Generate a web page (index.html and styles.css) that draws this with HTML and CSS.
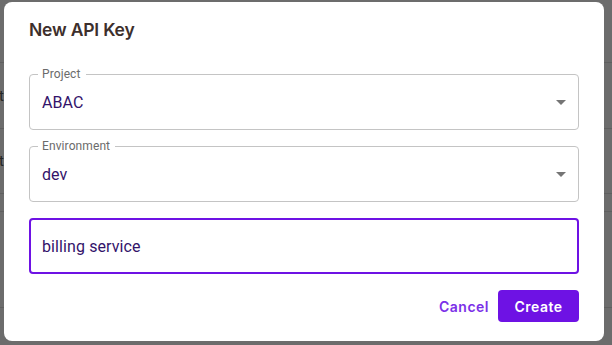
FILE: index.html
```html
<!DOCTYPE html>
<html lang="en">
<head>
  <meta charset="UTF-8" />
  <meta name="viewport" content="width=device-width, initial-scale=1.0" />
  <title>New API Key</title>
  <link rel="stylesheet" href="styles.css">
</head>
<body>

  <div class="page">
    <div class="row row-head"></div>
    <div class="row row-a"><span class="cell">t</span></div>
    <div class="row row-b"><span class="cell">t</span></div>
    <div class="row row-c"></div>
    <div class="row row-d"></div>
    <div class="row row-e"></div>
  </div>

  <div class="dialog">
    <h2 class="dialog-title">New API Key</h2>

    <div class="dialog-body">
      <div class="field">
        <span class="field-label">Project</span>
        <span class="field-value">ABAC</span>
        <svg class="arrow" viewBox="0 0 24 24" width="24" height="24"><path d="M7 10l5 5 5-5z"/></svg>
      </div>

      <div class="field">
        <span class="field-label">Environment</span>
        <span class="field-value">dev</span>
        <svg class="arrow" viewBox="0 0 24 24" width="24" height="24"><path d="M7 10l5 5 5-5z"/></svg>
      </div>

      <div class="field focused">
        <span class="field-value">billing service</span>
      </div>
    </div>

    <div class="dialog-actions">
      <button class="btn-text">Cancel</button>
      <button class="btn-primary">Create</button>
    </div>
  </div>

</body>
</html>
```

FILE: styles.css
```css
body {
  margin: 0;
  padding: 0;
  background: #6c6c6c;
  font-family: Roboto, "Liberation Sans", sans-serif;
  overflow: hidden;
}

.page {
  height: 345px;
}

.row {
  border-bottom: 1px solid #5f5f5f;
  display: flex;
  align-items: center;
  box-sizing: border-box;
}

.row-head { height: 63px; }
.row-a { height: 66px; }
.row-b { height: 65px; }
.row-c { height: 18px; }
.row-d { height: 96px; }
.row-e { height: 37px; border-bottom: none; }

.cell {
  color: #262626;
  font-size: 15px;
  margin-left: -1px;
}

/* Dialog */
.dialog {
  position: absolute;
  top: 2px;
  left: 4px;
  width: 600px;
  height: 339px;
  box-sizing: border-box;
  background: #fff;
  border-radius: 8px;
  padding: 0 25px;
  display: flex;
  flex-direction: column;
}

.dialog-title {
  margin: 0;
  padding: 16px 0 0 0;
  font-family: Inter, "Liberation Sans", sans-serif;
  font-size: 17.5px;
  font-weight: 600;
  line-height: 24px;
  color: #3d2f2c;
  letter-spacing: -0.2px;
}

.dialog-body {
  margin-top: 32px;
  display: flex;
  flex-direction: column;
  gap: 16px;
}

.field {
  position: relative;
  height: 56px;
  box-sizing: border-box;
  border: 1px solid #c4c4c4;
  border-radius: 4px;
  display: flex;
  align-items: center;
  justify-content: space-between;
  padding: 0 5px 0 12px;
}

.field.focused {
  border: 2px solid #6e12e4;
  padding-left: 11px;
}

.field-label {
  position: absolute;
  top: -7px;
  left: 8px;
  padding: 0 5px 0 4px;
  background: #fff;
  font-size: 12px;
  line-height: 12px;
  color: #6b6b6b;
  letter-spacing: 0.1px;
}

.field-value {
  font-size: 16px;
  color: #33136a;
  letter-spacing: 0.1px;
}

.arrow {
  fill: #757575;
}

.dialog-actions {
  margin-top: 16px;
  display: flex;
  justify-content: flex-end;
  align-items: center;
}

.dialog-actions button {
  font-family: Inter, "Liberation Sans", sans-serif;
  font-size: 14px;
  font-weight: 600;
  letter-spacing: 0.5px;
  border: none;
  cursor: pointer;
  height: 32px;
}

.btn-text {
  background: none;
  color: #7b30e8;
  padding: 0 8px;
  margin-right: 1px;
}

.btn-primary {
  background: #6e12e4;
  color: #fff;
  border-radius: 4px;
  padding: 0 16px;
  width: 81px;
}
```
